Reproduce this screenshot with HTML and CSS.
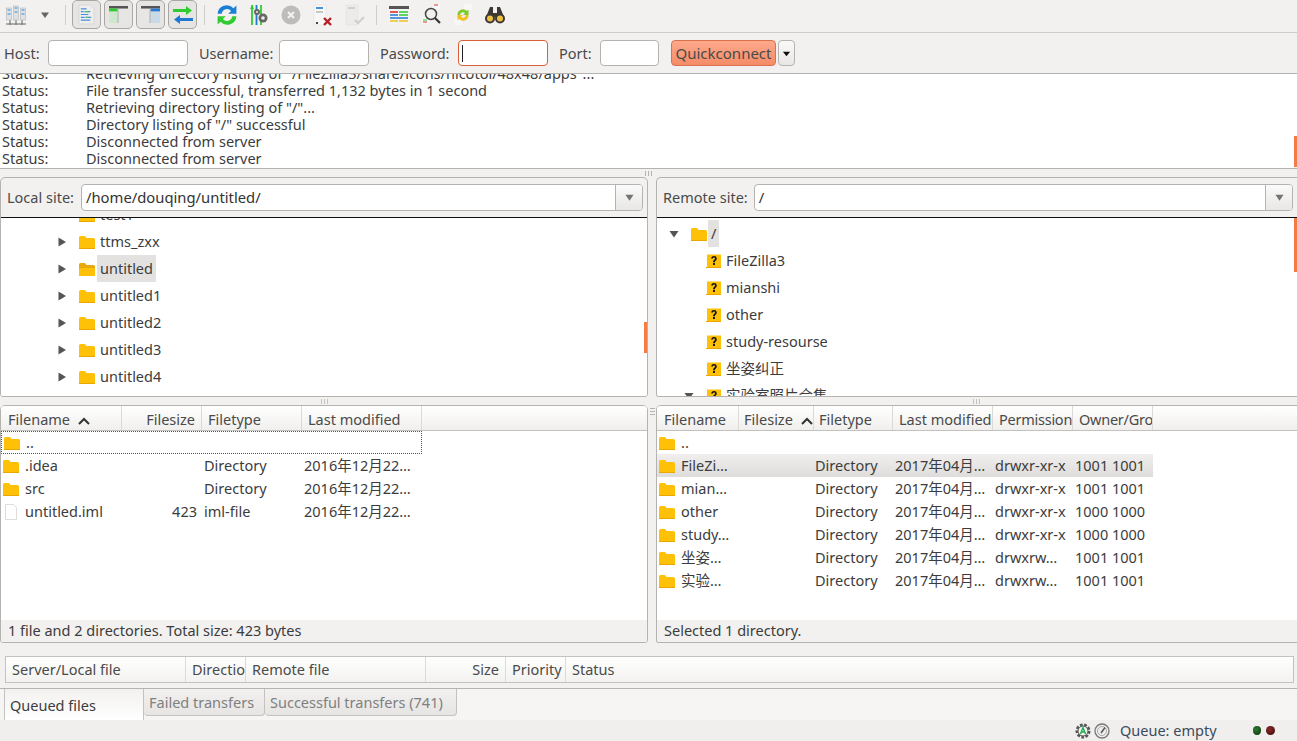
FILE: index.html
```html
<!DOCTYPE html>
<html lang="en">
<head>
<meta charset="utf-8">
<title>FileZilla</title>
<link rel="stylesheet" href="styles.css">
</head>
<body>
<svg class="defs" width="0" height="0">
  <defs>
    <symbol id="folder" viewBox="0 0 16 16"><path d="M0 3.5Q0 2 1.5 2H6l1.5 2h7Q16 4 16 5.5V14.5Q16 15 15 15H1Q0 15 0 14.5Z" fill="#ffc107"/><path d="M0 14h16v1H0z" fill="#e8a800"/></symbol>
    <symbol id="folderopen" viewBox="0 0 16 16"><path d="M0 3.5Q0 2 1.5 2H6l1.5 2h7Q16 4 16 5.5V14.5Q16 15 15 15H1Q0 15 0 14.5Z" fill="#e9a90a"/><path d="M0 8.5Q0 7 2 7h12q2 0 2 1.5V14.5Q16 15 15 15H1Q0 15 0 14.5Z" fill="#ffc107"/></symbol>
    <symbol id="unknown" viewBox="0 0 16 16"><path d="M1 1.5h14v13H1z" fill="#ffc107"/><path d="M0 14h15v1H0z" fill="#e8a800"/><path d="M5.2 5.6Q5.4 3 8 3t2.8 2.4c0 2-2 2-2 3.8H7c0-2.4 2-2.6 2-3.8 0-.6-.4-1-1-1s-1 .4-1 1.2ZM7 10h1.9v2H7Z" fill="#111"/></symbol>
    <symbol id="right" viewBox="0 0 10 10"><path d="M1.5 0.5 9 5 1.5 9.5Z" fill="#555"/></symbol>
    <symbol id="down" viewBox="0 0 10 10"><path d="M0.500 2h9L5 8.500Z" fill="#555"/></symbol>
  </defs>
</svg>

<header class="toolbar">
  <svg class="tool" viewBox="0 0 20 24"><path d="M0 21h20M10 17v5M4 17v5M16 17v5" stroke="#666" fill="none"/><rect x="0.500" y="5" width="5" height="12" fill="#dfe2e5" stroke="#aaa" stroke-width=".5"/><rect x="7.500" y="3" width="5" height="14" fill="#dfe2e5" stroke="#aaa" stroke-width=".5"/><rect x="14.500" y="5" width="5" height="12" fill="#dfe2e5" stroke="#aaa" stroke-width=".5"/><path d="M1.500 7h3M1.500 11h3M8.500 5h3M8.500 9h3M15.500 7h3M15.500 11h3" stroke="#2f8fe0"/></svg>
  <svg class="caret" viewBox="0 0 10 10"><path d="M1 2.500h8L5 8Z" fill="#666"/></svg>
  <span class="tsep first"></span>
  <span class="toggle">
    <svg viewBox="0 0 18 22" width="17" height="21"><path d="M1 1h12l4 4v16H1z" fill="#eee" stroke="#ccc" stroke-width=".6"/><path d="M3 5h6M3 8h3M7 8h6M3 11h8M3 14h4M8 14h6M3 17h10" stroke="#4a90d9" stroke-width="1.300"/><path d="M7 8h4M8 14h3" stroke="#5cc25c" stroke-width="1.300"/></svg>
  </span>
  <span class="toggle">
    <svg viewBox="0 0 20 20" width="19" height="17" preserveAspectRatio="none"><rect width="20" height="20" fill="#e6e6e4"/><rect width="20" height="3" fill="#555"/><rect y="3" width="9" height="3.600" fill="#2ecc2e"/><rect y="6.600" width="9" height="13.400" fill="#cfe6cf"/><rect x="9" y="3" width="1" height="17" fill="#aaa"/></svg>
  </span>
  <span class="toggle">
    <svg viewBox="0 0 20 20" width="19" height="17" preserveAspectRatio="none"><rect width="20" height="20" fill="#e6e6e4"/><rect width="20" height="3" fill="#555"/><rect x="10" y="3" width="10" height="3.600" fill="#2a7bd0"/><rect x="10" y="6.600" width="10" height="13.400" fill="#c9d9e8"/><rect x="9" y="3" width="1" height="17" fill="#aaa"/></svg>
  </span>
  <span class="toggle">
    <svg viewBox="0 0 20 20" width="20" height="20"><path d="M0 4h13V1l6 4.500L13 10V7H0z" fill="#2ecc2e"/><path d="M20 13H7v-3l-6 4.500L7 19v-3h13z" fill="#1f78d1"/></svg>
  </span>
  <span class="tsep second"></span>
  <svg class="tool" viewBox="1.500 1.500 17 17"><path d="M2 9a7.800 7.800 0 0 1 13.500-4.800L18 2v7h-7l2.500-2.500A4.600 4.600 0 0 0 5.500 9Z" fill="#1c7fd6"/><path d="M18 11a7.800 7.800 0 0 1-13.500 4.800L2 18v-7h7l-2.500 2.500a4.600 4.600 0 0 0 8-2.500Z" fill="#2ecc2e"/></svg>
  <svg class="tool" viewBox="0 0 20 22"><path d="M3 1v20" stroke="#2ecc2e" stroke-width="1.800"/><path d="M7.500 1v20" stroke="#1f78d1" stroke-width="1.800"/><path d="M12 1v20" stroke="#2ecc2e" stroke-width="1.800"/><path d="M1 5l2-4 2 4z" fill="#2ecc2e"/><circle cx="8" cy="8" r="3" fill="#666"/><circle cx="14" cy="14" r="4.500" fill="#666"/><circle cx="14" cy="14" r="1.800" fill="#eee"/><circle cx="8" cy="8" r="1" fill="#eee"/></svg>
  <svg class="tool" viewBox="0 0 20 20"><circle cx="10" cy="10" r="9.500" fill="#bdbcba"/><path d="M7 7l6 6M13 7l-6 6" stroke="#f2f1f0" stroke-width="2.200"/></svg>
  <svg class="tool" viewBox="0 0 20 22"><path d="M1 1h12v20H1z" fill="#f7f7f7" stroke="#ddd" stroke-width=".5"/><path d="M3 3h7v2H3z" fill="#4a90d9"/><path d="M3 8h7" stroke="#999"/><path d="M3 18h2v2H3z" fill="#444"/><path d="M11 14l7 7M18 14l-7 7" stroke="#b3202a" stroke-width="2.400"/></svg>
  <svg class="tool" viewBox="0 0 20 22"><path d="M1 1h12v20H1z" fill="#ecebe9" stroke="#e0dfdd" stroke-width=".5"/><path d="M3 3h7v2H3z" fill="#d0cfcd"/><path d="M10 16l3 3 6-6" stroke="#cfcecc" stroke-width="2" fill="none"/></svg>
  <span class="tsep third"></span>
  <svg class="tool" viewBox="0 0 20 18"><rect width="20" height="3" fill="#555"/><rect y="3" width="20" height="15" fill="#f4f4f4"/><path d="M1 6h8" stroke="#d33" stroke-width="1.600"/><path d="M10 6h9M10 9h9" stroke="#2ecc2e" stroke-width="1.600"/><path d="M1 9h8M1 12h18" stroke="#1f78d1" stroke-width="1.600"/><path d="M1 15h8M10 15h9" stroke="#f0c020" stroke-width="1.600"/></svg>
  <svg class="tool" viewBox="0 0 20 24"><path d="M12 1h7v5h-7z" fill="#f7f7f7"/><path d="M13 2h4" stroke="#d33"/><path d="M1 15h7v6H1z" fill="#f7f7f7"/><path d="M2 17h4" stroke="#2ecc2e"/><path d="M2 19h4" stroke="#d33"/><circle cx="10" cy="11" r="5.500" fill="#f2f1f0" stroke="#444" stroke-width="1.500"/><path d="M14 15l5 5" stroke="#333" stroke-width="2.200"/></svg>
  <svg class="tool" viewBox="0 0 20 24"><path d="M11 1h8v6h-8zM1 15h8v7H1z" fill="#f7f7f7"/><path d="M4.500 12a5.500 5.500 0 0 1 9.500-4l1.500-1.500V12H10l2-2a3 3 0 0 0-5 2Z" fill="#7ccb2a"/><path d="M15.500 12a5.500 5.500 0 0 1-9.500 4l-1.500 1.500V12H10l-2 2a3 3 0 0 0 5-2Z" fill="#f0c020"/></svg>
  <svg class="tool" viewBox="0 0 20 18"><path d="M5 1h3v6h4V1h3l4 10H1Z" fill="#3d3833"/><circle cx="5" cy="12.500" r="5" fill="#3d3833"/><circle cx="15" cy="12.500" r="5" fill="#3d3833"/><circle cx="5" cy="12.500" r="3" fill="#f0c040"/><circle cx="15" cy="12.500" r="3" fill="#f0c040"/></svg>
</header>

<form class="quickbar">
  <label class="qlabel lhost">Host:</label><span class="qinput ihost"></span>
  <label class="qlabel luser">Username:</label><span class="qinput iuser"></span>
  <label class="qlabel lpass">Password:</label><span class="qinput ipass"><i class="cursor"></i></span>
  <label class="qlabel lport">Port:</label><span class="qinput iport"></span>
  <button type="button" class="qconnect">Quickconnect</button>
  <button type="button" class="qdrop"><svg viewBox="0 0 10 10" width="9" height="9"><path d="M1 3h8L5 8Z" fill="#111"/></svg></button>
</form>

<section class="log">
  <div class="loginner">
    <div class="logline"><span class="lk">Status:</span><span>Retrieving directory listing of "/FileZilla3/share/icons/nicotol/48x48/apps"...</span></div>
    <div class="logline"><span class="lk">Status:</span><span>File transfer successful, transferred 1,132 bytes in 1 second</span></div>
    <div class="logline"><span class="lk">Status:</span><span>Retrieving directory listing of "/"...</span></div>
    <div class="logline"><span class="lk">Status:</span><span>Directory listing of "/" successful</span></div>
    <div class="logline"><span class="lk">Status:</span><span>Disconnected from server</span></div>
    <div class="logline"><span class="lk">Status:</span><span>Disconnected from server</span></div>
  </div>
  <i class="thumb thumblog"></i>
</section>

<div class="hsash"><i class="gripv"></i></div>

<main class="panes">
  <section class="pane">
    <div class="sitepanel">
      <div class="sitebar">
        <span class="sitelabel">Local site:</span>
        <div class="combo"><span class="combotext">/home/douqing/untitled/</span><span class="combobtn"><svg viewBox="0 0 10 10" width="10" height="10"><use href="#down"/></svg></span></div>
      </div>
      <div class="tree">
        <div class="treeinner local">
          <div class="trow"><svg class="fico"><use href="#folder"/></svg><span class="tname">test1</span></div>
          <div class="trow"><svg class="tw"><use href="#right"/></svg><svg class="fico"><use href="#folder"/></svg><span class="tname">ttms_zxx</span></div>
          <div class="trow"><svg class="tw"><use href="#right"/></svg><svg class="fico"><use href="#folderopen"/></svg><span class="tname sel">untitled</span></div>
          <div class="trow"><svg class="tw"><use href="#right"/></svg><svg class="fico"><use href="#folder"/></svg><span class="tname">untitled1</span></div>
          <div class="trow"><svg class="tw"><use href="#right"/></svg><svg class="fico"><use href="#folder"/></svg><span class="tname">untitled2</span></div>
          <div class="trow"><svg class="tw"><use href="#right"/></svg><svg class="fico"><use href="#folder"/></svg><span class="tname">untitled3</span></div>
          <div class="trow"><svg class="tw"><use href="#right"/></svg><svg class="fico"><use href="#folder"/></svg><span class="tname">untitled4</span></div>
        </div>
        <i class="thumb thumbtreel"></i>
      </div>
    </div>
    <div class="vsash"><i class="griph"></i></div>
    <div class="listpanel">
      <div class="listbody">
        <div class="lhead lgrid">
          <span class="hc">Filename<svg class="sort" viewBox="0 0 12 8"><path d="M1 7l5-5 5 5" stroke="#333" stroke-width="2" fill="none"/></svg></span><span class="hc r">Filesize</span><span class="hc">Filetype</span><span class="hc">Last modified</span>
        </div>
        <div class="lrow lgrid focus"><span class="c"><svg class="lico"><use href="#folder"/></svg>..</span></div>
        <div class="lrow lgrid"><span class="c"><svg class="lico"><use href="#folder"/></svg>.idea</span><span></span><span class="c">Directory</span><span class="c">2016年12月22…</span></div>
        <div class="lrow lgrid"><span class="c"><svg class="lico"><use href="#folder"/></svg>src</span><span></span><span class="c">Directory</span><span class="c">2016年12月22…</span></div>
        <div class="lrow lgrid"><span class="c"><svg class="lico" viewBox="0 0 16 16"><path d="M2.500.5h8l3 3v12h-11z" fill="#fff" stroke="#ddd"/></svg>untitled.iml</span><span class="c r">423</span><span class="c">iml-file</span><span class="c">2016年12月22…</span></div>
      </div>
      <div class="liststatus">1 file and 2 directories. Total size: 423 bytes</div>
    </div>
  </section>
  <div class="psash"><i class="griph lower"></i></div>
  <section class="pane">
    <div class="sitepanel">
      <div class="sitebar">
        <span class="sitelabel">Remote site:</span>
        <div class="combo"><span class="combotext">/</span><span class="combobtn"><svg viewBox="0 0 10 10" width="10" height="10"><use href="#down"/></svg></span></div>
      </div>
      <div class="tree">
        <div class="treeinner remote">
          <div class="trow"><svg class="tw"><use href="#down"/></svg><svg class="fico"><use href="#folder"/></svg><span class="tname sel">/</span></div>
          <div class="trow sub"><svg class="fico"><use href="#unknown"/></svg><span class="tname">FileZilla3</span></div>
          <div class="trow sub"><svg class="fico"><use href="#unknown"/></svg><span class="tname">mianshi</span></div>
          <div class="trow sub"><svg class="fico"><use href="#unknown"/></svg><span class="tname">other</span></div>
          <div class="trow sub"><svg class="fico"><use href="#unknown"/></svg><span class="tname">study-resourse</span></div>
          <div class="trow sub"><svg class="fico"><use href="#unknown"/></svg><span class="tname">坐姿纠正</span></div>
          <div class="trow sub open"><svg class="tw"><use href="#down"/></svg><svg class="fico"><use href="#unknown"/></svg><span class="tname">实验室照片合集</span></div>
        </div>
        <i class="thumb thumbtreer"></i>
      </div>
    </div>
    <div class="vsash"><i class="griph"></i></div>
    <div class="listpanel">
      <div class="listbody">
        <div class="lhead rgrid">
          <span class="hc">Filename</span><span class="hc">Filesize<svg class="sort rs" viewBox="0 0 12 8"><path d="M1 7l5-5 5 5" stroke="#333" stroke-width="2" fill="none"/></svg></span><span class="hc">Filetype</span><span class="hc">Last modified</span><span class="hc tight">Permission</span><span class="hc tight">Owner/Gro</span>
        </div>
        <div class="lrow rgrid"><span class="c"><svg class="lico"><use href="#folder"/></svg>..</span></div>
        <div class="lrow rgrid selrow"><span class="c"><svg class="lico"><use href="#folder"/></svg>FileZi…</span><span></span><span class="c">Directory</span><span class="c">2017年04月…</span><span class="c">drwxr-xr-x</span><span class="c">1001 1001</span></div>
        <div class="lrow rgrid"><span class="c"><svg class="lico"><use href="#folder"/></svg>mian…</span><span></span><span class="c">Directory</span><span class="c">2017年04月…</span><span class="c">drwxr-xr-x</span><span class="c">1001 1001</span></div>
        <div class="lrow rgrid"><span class="c"><svg class="lico"><use href="#folder"/></svg>other</span><span></span><span class="c">Directory</span><span class="c">2017年04月…</span><span class="c">drwxr-xr-x</span><span class="c">1000 1000</span></div>
        <div class="lrow rgrid"><span class="c"><svg class="lico"><use href="#folder"/></svg>study…</span><span></span><span class="c">Directory</span><span class="c">2017年04月…</span><span class="c">drwxr-xr-x</span><span class="c">1000 1000</span></div>
        <div class="lrow rgrid"><span class="c"><svg class="lico"><use href="#folder"/></svg>坐姿…</span><span></span><span class="c">Directory</span><span class="c">2017年04月…</span><span class="c">drwxrw…</span><span class="c">1001 1001</span></div>
        <div class="lrow rgrid"><span class="c"><svg class="lico"><use href="#folder"/></svg>实验…</span><span></span><span class="c">Directory</span><span class="c">2017年04月…</span><span class="c">drwxrw…</span><span class="c">1001 1001</span></div>
      </div>
      <div class="liststatus">Selected 1 directory.</div>
    </div>
  </section>
</main>

<section class="queue">
  <div class="qhead">
    <span class="qh q1">Server/Local file</span><span class="qh q2">Directio</span><span class="qh q3">Remote file</span><span class="qh q4">Size</span><span class="qh q5">Priority</span><span class="qh q6">Status</span>
  </div>
</section>

<nav class="tabs">
  <span class="tab active">Queued files</span><span class="tab t2">Failed transfers</span><span class="tab t3">Successful transfers (741)</span>
</nav>

<footer class="statusbar">
  <svg class="sico" viewBox="0 0 16 16"><circle cx="8" cy="8" r="6" fill="none" stroke="#555" stroke-width="3" stroke-dasharray="2.600 1.500"/><circle cx="8" cy="8" r="5" fill="#f4f4f4" stroke="#555"/><path d="M5.500 11L8 4.500l2.500 6.500M6.500 9h3" stroke="#22b14c" stroke-width="1.500" fill="none"/></svg>
  <svg class="sico s2" viewBox="0 0 16 16"><circle cx="8" cy="8" r="7" fill="#eee" stroke="#777" stroke-width="1.300"/><circle cx="8" cy="8" r="4.500" fill="none" stroke="#aaa"/><path d="M7 10l4-5.500" stroke="#555" stroke-width="1.500"/></svg>
  <span class="qstate">Queue: empty</span>
  <i class="lamp green"></i><i class="lamp red"></i>
</footer>
</body>
</html>
```
FILE: styles.css
```css
* { box-sizing: border-box; }
html, body { margin: 0; padding: 0; }
body {
  width: 1297px; height: 741px; overflow: hidden;
  background: #f2f1f0; color: #3c3c3c;
  font: 14.5px/17px "Noto Sans", "Noto Sans CJK SC", sans-serif;
  display: flex; flex-direction: column;
}
.defs { position: absolute; }
svg { display: block; flex: none; }

.toolbar { height: 33px; padding: 0 0 3px 6px; display: flex; align-items: center; border-bottom: 1px solid #cfcdca; }
.tool { width: 20px; height: 24px; margin-right: 12px; }
.caret { width: 10px; height: 10px; margin: 0 15px 0 2px; }
.tsep { width: 1px; height: 20px; background: #cfcdca; }
.tsep.first { margin-right: 6px; }
.tsep.second { margin: 0 12px 0 4px; }
.tsep.third { margin: 0 12px 0 -1px; }
.toggle {
  width: 29px; height: 29px; margin-right: 3px; display: flex; align-items: center; justify-content: center;
  border: 1px solid #a9a7a3; border-radius: 5px; background: #e6e5e3;
}

.quickbar { height: 41px; display: flex; align-items: center; border-bottom: 1px solid #b5b3af; }
.qlabel { color: #4a4a4a; }
.lhost { margin-left: 4px; width: 44px; }
.luser { margin-left: 11px; width: 80px; }
.lpass { margin-left: 11px; width: 78px; }
.lport { margin-left: 11px; width: 41px; }
.qinput { height: 26px; background: #fff; border: 1px solid #b5b3af; border-radius: 4px; display: flex; align-items: center; }
.ihost { width: 140px; }
.iuser { width: 90px; }
.ipass { width: 90px; border-color: #d9603a; }
.iport { width: 59px; }
.cursor { width: 1px; height: 17px; background: #222; margin-left: 3px; }
.qconnect {
  width: 105px; height: 26px; margin-left: 12px; padding: 0; color: #4a4a4a;
  font: inherit; font-size: 15px; border: 1px solid #d9714d; border-radius: 4px;
  background: linear-gradient(#fca98b, #f58c68);
}
.qdrop {
  width: 17px; height: 26px; margin-left: 2px; padding: 0; display: flex; align-items: center; justify-content: center;
  border: 1px solid #b5b3af; border-radius: 4px; background: linear-gradient(#fafafa, #e8e7e5);
}

.log { position: relative; height: 95px; background: #fff; border-bottom: 1px solid #b5b3af; overflow: hidden; }
.loginner { margin-top: -9px; }
.logline { height: 17px; padding-left: 2px; display: flex; white-space: nowrap; }
.lk { width: 84px; }
.thumb { position: absolute; background: #f47c45; width: 3px; display: block; }
.thumblog { right: 0; top: 62px; height: 31px; }

.hsash { height: 8px; display: flex; justify-content: center; align-items: center; }
.gripv { width: 7px; height: 5px; display: block; background: repeating-linear-gradient(90deg, #b5b3af 0 1px, transparent 1px 3px); }
.griph { width: 5px; height: 7px; display: block; background: repeating-linear-gradient(180deg, #b5b3af 0 1px, transparent 1px 3px); }

.panes { height: 466px; display: flex; }
.pane { display: flex; flex-direction: column; min-width: 0; }
.pane:first-child { width: 648px; }
.pane:last-child { width: 641px; }
.psash { position: relative; width: 8px; }
.griph.lower { position: absolute; left: 2px; top: 231px; }

.sitepanel { height: 220px; display: flex; flex-direction: column; border: 1px solid #b5b3af; border-radius: 5px 5px 3px 3px; overflow: hidden; }
.pane:last-child .sitepanel, .pane:last-child .listpanel { border-right: 0; border-radius: 5px 0 0 3px; }
.sitebar { height: 40px; flex: none; padding: 6px 4px 0 6px; display: flex; align-items: flex-start; border-bottom: 1px solid #111; }
.sitelabel { height: 27px; line-height: 27px; color: #4a4a4a; margin-right: 6px; white-space: nowrap; }
.pane:first-child .sitelabel { margin-right: 7px; }
.combo { flex: 1; height: 27px; display: flex; background: #fff; border: 1px solid #b5b3af; border-radius: 4px; }
.combotext { flex: 1; line-height: 25px; padding-left: 4px; font-size: 14.800px; color: #333; }
.combobtn { width: 27px; display: flex; align-items: center; justify-content: center; border-left: 1px solid #b5b3af; background: linear-gradient(#fafafa, #e8e7e5); border-radius: 0 3px 3px 0; }
.combobtn svg { width: 9px; height: 9px; opacity: .8; }

.tree { position: relative; flex: 1; background: #fff; overflow: hidden; }
.treeinner.local { margin-top: -17px; padding-left: 56px; }
.treeinner.remote { margin-top: 2px; padding-left: 12px; }
.trow { height: 27px; display: flex; align-items: center; white-space: nowrap; }
.tw { width: 10px; height: 10px; margin-right: 12px; }
.fico { width: 16px; height: 16px; margin-right: 2px; }
.remote .fico { margin-right: 1px; }
.treeinner.local .trow:first-child { padding-left: 22px; }
.tname { height: 27px; line-height: 27px; padding: 0 3px; color: #3c3c3c; }
.tname.sel { background: #e3e2e0; }
.trow.sub { padding-left: 37px; }
.trow.open { padding-left: 15px; }
.thumbtreel { right: 0; top: 104px; height: 31px; }
.thumbtreer { right: 0; top: 0; height: 54px; }

.vsash { height: 8px; display: flex; align-items: center; justify-content: center; }
.vsash .griph { width: 7px; height: 5px; background: repeating-linear-gradient(90deg, #c5c3bf 0 1px, transparent 1px 3px); }

.listpanel { flex: 1; display: flex; flex-direction: column; border: 1px solid #b5b3af; border-radius: 5px 5px 3px 3px; overflow: hidden; }
.listbody { flex: 1; background: #fff; }
.lgrid { display: grid; grid-template-columns: 121px 80px 100px 120px; width: 421px; }
.rgrid { display: grid; grid-template-columns: 82px 75px 79px 100px 80px 80px; width: 496px; }
.lhead { height: 25px; background: linear-gradient(#fff, #f0efed); border-bottom: 1px solid #c4c2be; width: 100%; }
.hc { position: relative; height: 24px; line-height: 26px; padding: 0 6px; border-right: 1px solid #dcdad6; white-space: nowrap; overflow: hidden; color: #4a4a4a; }
.hc.tight { letter-spacing: -.25px; padding-right: 0; }
.lhead.lgrid { grid-template-columns: 121px 80px 100px 120px 1fr; }
.lhead.rgrid { grid-template-columns: 82px 75px 79px 100px 80px 80px 1fr; }
.rgrid .hc:nth-child(2), .rgrid .hc:nth-child(3) { padding-left: 5px; }
.hc:first-child { padding-left: 7px; }
.r { text-align: right; }
.sort { display: inline-block; width: 12px; height: 8px; margin: 0 0 1px 8px; vertical-align: middle; }
.lrow { height: 23px; line-height: 23px; white-space: nowrap; }
.c { display: block; padding: 0 2px; overflow: hidden; color: #3c3c3c; }
.c.r { padding-right: 5px; }
.rgrid .c:nth-child(3) { padding-left: 1px; }
.lico { display: inline-block; width: 16px; height: 16px; margin: 0 6px 0 0; vertical-align: -3px; }
.focus { border: 1px dotted #555; line-height: 21px; }
.selrow { background: linear-gradient(#f0efee, #dedddb); }
.liststatus { height: 22px; line-height: 20px; padding-left: 7px; background: #f2f1f0; color: #3c3c3c; }

.queue { height: 46px; padding: 13px 3px 0 5px; border-bottom: 1px solid #b5b3af; }
.qhead { height: 27px; display: flex; background: linear-gradient(#fff, #f3f2f0); border: 1px solid #c4c2be; }
.qh { line-height: 25px; padding: 0 6px; border-right: 1px solid #dcdad6; white-space: nowrap; overflow: hidden; color: #4a4a4a; }
.q1 { width: 180px; }
.q2 { width: 60px; }
.q3 { width: 180px; }
.q4 { width: 80px; text-align: right; }
.q5 { width: 60px; }
.q6 { flex: 1; border-right: 0; }

.tabs { height: 31px; padding-left: 4px; display: flex; align-items: flex-start; background: #f6f5f4; }
.tab { height: 27px; line-height: 27px; padding-left: 5px; color: #808080; background: linear-gradient(#f2f1f0, #e6e5e3); border: 1px solid #c4c2be; border-top: 0; border-left: 0; border-radius: 0 0 4px 4px; white-space: nowrap; }
.tab.active { width: 140px; height: 31px; line-height: 33px; color: #3c3c3c; background: linear-gradient(#f2f1f0, #fff); border: 0; border-left: 1px solid #c4c2be; border-right: 1px solid #c4c2be; border-radius: 0; }
.t2 { width: 121px; }
.t3 { width: 192px; }

.statusbar { flex: 1; display: flex; align-items: center; padding: 0 17px 0 1075px; background: #f0efee; }
.sico { width: 16px; height: 16px; }
.s2 { margin-left: 3px; }
.qstate { margin-left: 10px; width: 138px; color: #3c4a5c; }
.lamp { width: 9px; height: 9px; border-radius: 50%; display: block; margin-right: 5px; }
.green { background: radial-gradient(circle at 40% 35%, #2f7a2f, #0a2f0a); }
.red { background: radial-gradient(circle at 40% 35%, #8a2828, #3a0a0a); }
```
